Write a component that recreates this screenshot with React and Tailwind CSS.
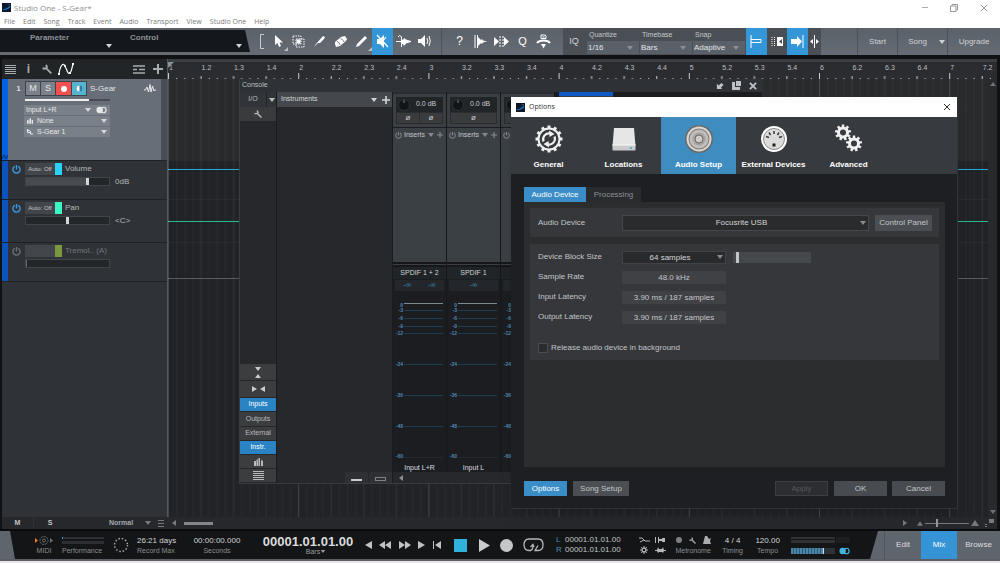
import React, { useState } from 'react';

const BAR = 130.2;
const BEAT = BAR / 4;

const MENU = ['File', 'Edit', 'Song', 'Track', 'Event', 'Audio', 'Transport', 'View', 'Studio One', 'Help'];

const METER_MARKS = [
  ['0', 11, 13],
  ['-3', 18, 18],
  ['-6', 26, 26],
  ['-9', 34, 34],
  ['-12', 41, 41],
  ['-24', 72, 72],
  ['-36', 103, 103],
  ['-48', 134, 134],
  ['-60', 165, 164],
];

const Down = ({ className = '' }) => (
  <svg viewBox="0 0 6 4" className={`w-[6px] h-1 shrink-0 ${className}`} fill="currentColor" aria-hidden="true">
    <path d="M0 0h6L3 4z" />
  </svg>
);

const Plus = ({ className = 'size-2' }) => (
  <svg viewBox="0 0 10 10" className={`shrink-0 ${className}`} stroke="currentColor" strokeWidth="2" aria-hidden="true">
    <path d="M5 0v10M0 5h10" />
  </svg>
);

const Wrench = ({ className = 'size-[10px]' }) => (
  <svg viewBox="0 0 10 10" className={`shrink-0 ${className}`} fill="none" stroke="currentColor" strokeWidth="1.800" aria-hidden="true">
    <path d="M.5 4.500h3.500l1-1.500L4 .8M4.300 4.300l5 5" />
  </svg>
);

const Power = ({ className = '' }) => (
  <svg viewBox="0 0 10 10" className={`shrink-0 ${className}`} fill="none" stroke="currentColor" strokeWidth="1.500" aria-hidden="true">
    <path d="M3 1.500a4 4 0 1 0 4 0M5 0v5" />
  </svg>
);

const Lines = ({ className = 'w-[11px] h-[9px]' }) => (
  <svg
    viewBox="0 0 11 9"
    preserveAspectRatio="none"
    shapeRendering="crispEdges"
    className={`shrink-0 ${className}`}
    fill="currentColor"
    aria-hidden="true"
  >
    <path d="M0 0h11v1H0zM0 2h11v1H0zM0 4h11v1H0zM0 6h11v1H0zM0 8h11v1H0z" />
  </svg>
);

const Bars = ({ className = '' }) => (
  <svg viewBox="0 0 9 8" className={`shrink-0 ${className}`} fill="currentColor" aria-hidden="true">
    <path d="M0 3h2v5H0zM2.500 1.500h1.500v6.500H2.500zM4.500 0h1.500v8H4.500zM7 2.500h2V8H7z" />
  </svg>
);

const Stereo = ({ className = '' }) => (
  <svg viewBox="0 0 12 8" className={`shrink-0 ${className}`} aria-hidden="true">
    <circle cx="4" cy="4" r="3.500" fill="currentColor" />
    <circle cx="8" cy="4" r="3" fill="none" stroke="currentColor" strokeWidth="1.300" />
  </svg>
);

const AppLogo = ({ className = '' }) => (
  <svg viewBox="0 0 10 10" className={`shrink-0 ${className}`} aria-hidden="true">
    <rect width="10" height="10" fill="#0c1829" />
    <path d="M1 7c3 0 4-1 8-4v2C6 7 4 8 1 8z" fill="#1e7fd6" />
    <path d="M5 2l4-1v2z" fill="#35506e" />
  </svg>
);

const Select = ({ label, options, className = '', textClass = '', arrowClass = 'right-1 text-gray-400', icon }) => (
  <span className={`relative flex items-center ${className}`}>
    {icon}
    <select aria-label={label} className={`w-full h-full appearance-none bg-transparent p-0 outline-none ${textClass}`}>
      {options.map((o) => (
        <option key={o}>{o}</option>
      ))}
    </select>
    <Down className={`pointer-events-none absolute ${arrowClass}`} />
  </span>
);

/* ---------- title + menu ---------- */

const TitleBar = () => (
  <header className="bg-white text-[#7b7b7b] font-['Open_Sans',sans-serif]">
    <div className="flex h-[15px] items-center pl-[2px] pr-3">
      <AppLogo className="size-[9px]" />
      <h1 className="ml-[3px] text-[8px] leading-[15px] text-[#8f8f8f]">Studio One - S-Gear*</h1>
      <div className="ml-auto flex items-center gap-[22px] text-[#999]">
        <button aria-label="Minimize" className="w-[6px] h-px bg-[#aaa]" />
        <button aria-label="Restore">
          <svg viewBox="0 0 8 8" className="size-2" fill="none" stroke="currentColor">
            <path d="M.5 2h5.500v5.500H.5zM2 2V.5h5.500V6H6" />
          </svg>
        </button>
        <button aria-label="Close">
          <svg viewBox="0 0 8 8" className="size-2" fill="none" stroke="currentColor">
            <path d="M1 1l6 6M7 1L1 7" />
          </svg>
        </button>
      </div>
    </div>
    <nav className="flex h-[13px] items-center gap-2 pl-1 text-[7px] leading-[13px]">
      {MENU.map((m) => (
        <button key={m}>{m}</button>
      ))}
    </nav>
  </header>
);

/* ---------- toolbar ---------- */

const TOOLS = [
  { name: 'Arrow', corner: true, d: <path d="M5 1v10l2.500-2 1.500 4 2-1-1.500-3.500H13z" fill="currentColor" /> },
  {
    name: 'Range',
    d: (
      <>
        <path d="M2 2h8v8H2zM5 5h8v8H5z" fill="none" stroke="currentColor" strokeDasharray="1.500 1" />
        <path d="M5.500 5.500h4v4h-4z" fill="currentColor" />
      </>
    ),
  },
  { name: 'Split', d: <path d="M2 13l2-3 7-8 2 1-1 2-4 4H6z" fill="currentColor" /> },
  {
    name: 'Eraser',
    d: (
      <>
        <path d="M2 8l6-5 4-1 2 3-1 2-6 5-4 1-1-3z" fill="currentColor" />
        <path d="M4 7.500q2.500.5 3 3.500M7.500 4.500q2.500.5 3.500 3.500" fill="none" stroke="#62686f" strokeWidth=".8" />
      </>
    ),
  },
  { name: 'Paint', corner: true, d: <path d="M2 13l1-3 8-8 2 2-8 8z" fill="currentColor" /> },
  {
    name: 'Mute',
    active: true,
    d: (
      <>
        <path d="M2 5h3l4-4v13l-4-4H2z" fill="currentColor" />
        <path d="M2 1l11 12M11 3l-3 4" stroke="currentColor" strokeWidth="1.200" />
      </>
    ),
  },
  {
    name: 'Bend',
    d: (
      <>
        <path d="M0 7h5V5l2 1 1-2 2 1.500L15 7v1l-5 1.500L8 12l-1-2-2 .5V8H0z" fill="currentColor" />
        <path d="M5.500 6V2.500M5.500 9v4M2 3q1.500-3 3.500 0" fill="none" stroke="currentColor" />
      </>
    ),
  },
  {
    name: 'Listen',
    d: (
      <>
        <path d="M1 5h3l4-4v12L4 9H1z" fill="currentColor" />
        <path d="M10 4q1.500 3 0 6M12 2q2.500 5 0 10" fill="none" stroke="currentColor" />
      </>
    ),
  },
];

const ToolIcon = ({ children }) => (
  <svg viewBox="0 0 15 15" className="size-[15px]" aria-hidden="true">{children}</svg>
);

const Toolbar = () => {
  const [tool, setTool] = useState('Mute');
  return (
    <div className="flex h-[27px] bg-gradient-to-b from-[#5b6168] to-[#666c75] text-white">
      {/* Parameter / Control */}
      <div className="flex w-[250px] shrink-0 items-stretch my-[2px] mb-[3px] bg-[#14181d] text-[8px] font-bold text-[#8d9196] [clip-path:polygon(0_0,245px_0,250px_100%,0_100%)]">
        <button className="relative w-[125px] pl-[30px] pb-[6px] text-left leading-[16px]">
          Parameter
          <Down className="absolute bottom-1 right-[13px] text-[#d3d5d7]" />
        </button>
        <button className="relative w-[125px] pl-[5px] pb-[6px] text-left leading-[16px]">
          Control
          <Down className="absolute bottom-1 right-2 text-[#d3d5d7]" />
        </button>
      </div>

      <div className="flex w-[17px] shrink-0 items-center justify-end pr-[3px] text-[#c8cacc]">
        <svg viewBox="0 0 4 15" className="w-1 h-[15px]" fill="none" stroke="currentColor" aria-hidden="true">
          <path d="M4 .5H.5v14H4" />
        </svg>
      </div>
      <div className="flex shrink-0">
        {TOOLS.map((t) => (
          <button
            key={t.name}
            aria-label={t.name}
            onClick={() => setTool(t.name)}
            className={`relative flex w-[21px] items-center justify-center ${tool === t.name ? 'bg-[#3396d8]' : ''}`}
          >
            <ToolIcon>{t.d}</ToolIcon>
            {t.corner && (
              <svg viewBox="0 0 4 4" className="absolute bottom-1 right-0 size-1 text-[#b9bcc0]" fill="currentColor">
                <path d="M4 0v4H0z" />
              </svg>
            )}
          </button>
        ))}
      </div>
      <div className="ml-[6px] w-px shrink-0 bg-[#4d5258]" />
      <div className="flex shrink-0 pl-[7px] pr-[9px] text-white">
        <button aria-label="Help" className="w-[21px] text-[12px] leading-[27px]">?</button>
        <button aria-label="Strip silence" className="flex w-[21px] items-center justify-center">
          <ToolIcon>
            <path d="M2 1v13M4.500 1v13" stroke="currentColor" />
            <path d="M5 3l3 3 1-1 1 1.500 4 1-4 1L9 10 8 9l-3 3z" fill="currentColor" />
          </ToolIcon>
        </button>
        <button aria-label="Quantize transients" className="flex w-[21px] items-center justify-center">
          <ToolIcon>
            <path d="M6 2v11M9 2v11" stroke="currentColor" strokeDasharray="2 1" />
            <path d="M0 3l5 4.500L0 12zM10 3l5 4.500-5 4.500z" fill="currentColor" />
          </ToolIcon>
        </button>
        <button aria-label="Quantize" className="w-[21px] text-[11px] leading-[27px]">Q</button>
        <button aria-label="Macros" className="flex w-[21px] items-center justify-center">
          <ToolIcon>
            <path d="M5 1h4l1 1v2.500H5zM6.500 3h2" fill="none" stroke="currentColor" />
            <path d="M1 9q2-2.500 6.500-2.500T14 9" fill="none" stroke="currentColor" strokeWidth="2" />
            <path d="M5 10h5l-2.500 4.500z" fill="currentColor" />
          </ToolIcon>
        </button>
      </div>

      {/* Quantize group */}
      <div className="flex shrink-0 bg-[#4a4f56]">
        <button className="w-[24px] pr-[2px] text-[9px] text-[#d3d5d7]">IQ</button>
        {[
          ['Quantize', ['1/16', '1/8', '1/4']],
          ['Timebase', ['Bars', 'Seconds', 'Samples']],
          ['Snap', ['Adaptive', 'Bar', 'Quantize']],
        ].map(([label, options]) => (
          <div key={label} className="flex w-[53px] flex-col border-r border-[#4a4f56] text-[#c4c7ca]">
            <span className="h-[13px] pl-[2px] text-[7px] leading-[13px]">{label}</span>
            <Select
              label={label}
              options={options}
              className="h-[13px] bg-[#5a6068] pl-px"
              textClass="text-[8px] text-[#e4e6e8]"
              arrowClass="right-[6px] text-[#8b9096]"
            />
          </div>
        ))}
        <button aria-label="Autoscroll" className="flex w-[21px] items-center justify-center bg-[#3396d8]">
          <ToolIcon>
            <path d="M2 1v13" stroke="currentColor" />
            <path d="M2 5.500h10v3H2" fill="none" stroke="currentColor" />
          </ToolIcon>
        </button>
        <button aria-label="Cursor follows edit" className="flex w-[20px] items-center justify-center">
          <ToolIcon>
            <path d="M2 3v9M4.500 3v9" stroke="currentColor" strokeDasharray="1 1" />
            <path d="M7 3h6v9H7z" fill="currentColor" />
            <path d="M12 5v5L9 7.500z" fill="#4a4f56" />
          </ToolIcon>
        </button>
        <button aria-label="Return to start" className="flex w-[21px] items-center justify-center bg-[#3396d8]">
          <ToolIcon>
            <path d="M1 5h6V2l5 5.500L7 13v-3H1z" fill="currentColor" />
            <path d="M13 1v13" stroke="currentColor" />
          </ToolIcon>
        </button>
        <button aria-label="Snap" className="flex w-[13px] items-center justify-center">
          <svg viewBox="0 0 11 15" className="w-[11px] h-[15px]" fill="currentColor" aria-hidden="true">
            <path d="M5 1h1v13H5zM4 5v5L1 7.500zM7 5v5l3-2.500z" />
          </svg>
        </button>
      </div>

      <div className="flex-1" />
      <div className="flex shrink-0 text-[8px] text-[#d0d3d6]">
        <button className="w-[40px] border-l border-[#4d5258]">Start</button>
        <button className="w-[40px] border-l border-[#4d5258]">Song</button>
        <button aria-label="Song list" className="flex w-[10px] items-center justify-center"><Down /></button>
        <button className="w-[53px] border-l border-[#4d5258]">Upgrade</button>
      </div>
    </div>
  );
};

/* ---------- track list ---------- */

const AutomationTrack = ({ name, color, value, level, filled, off, className }) => (
  <li className={`flex border-b border-[#1f2225] ${className}`}>
    <div className="w-[6px] bg-[#0b54c0]" />
    <div className="flex-1 pl-1 pt-[2px]">
      <div className="flex h-3 items-center">
        <button aria-label={`${name} on/off`} className={off ? 'text-[#6c7075]' : 'text-[#3a9be6]'}>
          <Power className="size-[9px]" />
        </button>
        <button className="ml-1 h-3 w-[30px] bg-[#42454a] text-[6px] leading-3 text-[#c3c6c9]">{off ? '' : 'Auto: Off'}</button>
        <span className={`h-3 w-[7px] ${color}`} />
        <span className={`ml-[3px] text-[8px] ${off ? 'text-[#72767b]' : 'text-[#b4b7ba]'}`}>{name}</span>
      </div>
      <div className="flex h-[13px] items-center">
        <div className="relative ml-[13px] h-[9px] w-[85px] border border-[#414549] bg-[#222629]">
          {filled && <div className="h-full bg-[#474b4f]" style={{ width: `${level}%` }} />}
          <input
            type="range"
            aria-label={name}
            defaultValue={level}
            className={
              off
                ? 'absolute inset-0 w-full h-full appearance-none bg-transparent [&::-webkit-slider-thumb]:appearance-none [&::-webkit-slider-thumb]:w-px [&::-webkit-slider-thumb]:h-[7px] [&::-webkit-slider-thumb]:bg-[#666]'
                : 'absolute inset-0 w-full h-full appearance-none bg-transparent [&::-webkit-slider-thumb]:appearance-none [&::-webkit-slider-thumb]:w-[3px] [&::-webkit-slider-thumb]:h-[7px] [&::-webkit-slider-thumb]:bg-[#d5d5d5]'
            }
          />
        </div>
        <span className="ml-[5px] text-[8px] leading-[13px] text-[#b4b7ba]">{value}</span>
      </div>
    </div>
  </li>
);

const TrackList = () => (
  <aside className="flex w-[165px] shrink-0 flex-col bg-[#2f3337]">
    <div className="flex h-[20px] items-center bg-[#222528] pl-[3px] pr-1 text-[#a9acaf]">
      <button aria-label="Track list"><Lines /></button>
      <button aria-label="Inspector" className="ml-[10px] w-[5px] text-[12px] font-bold leading-[18px]">i</button>
      <button aria-label="Tools" className="ml-[11px]"><Wrench /></button>
      <button aria-label="Automation" className="ml-[6px] text-white">
        <svg viewBox="0 0 16 12" className="w-4 h-3" fill="none" stroke="currentColor" strokeWidth="1.200">
          <path d="M1 11C2 3 5-1 7 3s3 9 5 7 2-6 3-9" />
          <path d="M0 10h2v2H0zM6 2h2v2H6zM11 9h2v2h-2zM14 0h2v2h-2z" fill="currentColor" stroke="none" />
        </svg>
      </button>
      <button aria-label="Track settings" className="ml-auto">
        <svg viewBox="0 0 12 9" className="w-3 h-[9px]" stroke="currentColor" strokeWidth="1.500">
          <path d="M0 1h12M0 4.500h4M6 4.500h6M0 8h12" />
        </svg>
      </button>
      <button aria-label="Add track" className="ml-2"><Plus className="size-[10px]" /></button>
    </div>

    <ul>
      <li className="flex h-[82px] border-b border-[#1f2225] bg-[#686e78] text-white">
        <div className="flex w-[6px] items-end bg-[#0062e0]">
          <svg viewBox="0 0 6 6" className="size-[6px]" fill="none" stroke="#0a2d66" aria-hidden="true">
            <path d="M0 5l2-4 2 4 2-4" />
          </svg>
        </div>
        <div className="flex-1 pl-1 pr-1 pt-[2px]">
          <div className="flex h-[15px] items-center text-[8px]">
            <span className="w-[13px] text-center font-bold text-[#d9dbdd]">1</span>
            <div className="flex gap-px border border-[#3f444a] bg-[#3f444a] text-[9px] leading-[13px] text-[#e3e5e7]">
              <button className="h-[13px] w-[14px] bg-[#7c828a]">M</button>
              <button className="h-[13px] w-[14px] bg-[#7c828a]">S</button>
              <button aria-label="Record" className="flex h-[13px] w-[15px] items-center justify-center bg-[#f0504f]">
                <span className="size-[6px] rounded-full bg-white" />
              </button>
              <button aria-label="Monitor" className="flex h-[13px] w-[14px] items-center justify-center bg-[#55b4cf]">
                <svg viewBox="0 0 6 6" className="size-[7px]">
                  <circle cx="3" cy="3" r="2.500" fill="#2d7f9c" />
                  <path d="M3 .5a2.500 2.500 0 0 0 0 5z" fill="#fff" />
                </svg>
              </button>
            </div>
            <span className="ml-[3px] text-[#e3e5e7]">S-Gear</span>
            <svg viewBox="0 0 12 9" className="ml-auto mr-[1px] w-3 h-[9px]" fill="none" stroke="#e9eaec" aria-hidden="true">
              <path d="M0 6h1.500L3 3l1.500 5L6 .5 7 8l1.500-6L10 7l.5-1H12" />
            </svg>
          </div>
          <div className="ml-[13px] mt-[3px] flex h-[2px] w-[85px] bg-[#474c54]">
            <div className="w-3/4 bg-[#eceded]" />
          </div>
          <div className="ml-3 mt-1 flex w-[86px] flex-col gap-px text-[#e6e8ea]">
            <div className="flex h-[10px] items-center bg-[#7a8088]">
              <Select
                label="Input"
                options={['Input L+R', 'Input L', 'Input R']}
                className="h-full w-[67px] pl-[2px]"
                textClass="text-[7px]"
                arrowClass="right-0 text-[#d4d6d8]"
              />
              <button aria-label="Stereo" className="ml-[5px]"><Stereo className="w-[11px] h-2" /></button>
            </div>
            <Select
              label="Output"
              options={['None', 'Main']}
              icon={<Bars className="mr-1 size-[6px]" />}
              className="h-[10px] bg-[#7a8088] pl-[3px]"
              textClass="text-[7px]"
              arrowClass="right-[3px] text-[#d4d6d8]"
            />
            <Select
              label="Instrument"
              options={['S-Gear 1', 'S-Gear 2']}
              icon={
                <svg viewBox="0 0 6 6" className="mr-1 size-[6px] shrink-0" fill="none" stroke="currentColor" aria-hidden="true">
                  <path d="M.5 0v3.500H3M.5 1.500H3M3.500 2v3H6" />
                </svg>
              }
              className="h-[10px] bg-[#7a8088] pl-[3px]"
              textClass="text-[7px]"
              arrowClass="right-[3px] text-[#d4d6d8]"
            />
          </div>
        </div>
        <div className="w-[6px] bg-[#474d52]" />
      </li>
      <AutomationTrack name="Volume" color="bg-[#2bd0fb]" value="0dB" level={75} filled className="h-[39px]" />
      <AutomationTrack name="Pan" color="bg-[#3cf5c2]" value="<C>" level={50} className="h-[43px]" />
      <AutomationTrack name="Tremol.. (A)" color="bg-[#7c983c]" value="" level={0} off className="h-[39px]" />
    </ul>
  </aside>
);

/* ---------- arrangement ---------- */

const Ruler = () => {
  const beats = Array.from({ length: 26 }, (_, i) => i);
  return (
    <div className="relative h-[20px] overflow-hidden border-t-[3px] border-[#3a3e42] bg-[#2a2c2f]">
      <div className="flex pl-px pt-[1px] text-[7px] leading-[9px] text-[#bcbfc2]">
        {beats.map((b) => (
          <span key={b} className="shrink-0" style={{ width: BEAT }}>
            {Math.floor(b / 4) + 1}
            {b % 4 ? `.${(b % 4) + 1}` : ''}
          </span>
        ))}
      </div>
      <svg className="absolute bottom-0 left-0 w-full h-[6px]" aria-hidden="true">
        <defs>
          <pattern id="ticks" width={BAR} height="6" patternUnits="userSpaceOnUse">
            {Array.from({ length: 16 }, (_, i) => (
              <rect key={i} x={(i * BAR) / 16} y={i === 0 ? 0 : i % 4 ? 5 : 3} width="1" height="6" fill="#c9cbcd" />
            ))}
          </pattern>
        </defs>
        <rect width="100%" height="6" fill="url(#ticks)" />
      </svg>
      <svg viewBox="0 0 6 6" className="absolute left-0 top-0 size-[6px] text-[#8a9197]" fill="currentColor" aria-hidden="true">
        <path d="M0 0h6L0 6z" />
      </svg>
    </div>
  );
};

const Grid = () => (
  <svg className="absolute inset-0 w-full h-full" aria-hidden="true">
    <defs>
      <pattern id="grid" width={BAR} height="40" patternUnits="userSpaceOnUse">
        {Array.from({ length: 16 }, (_, i) => (
          <rect
            key={i}
            x={(i * BAR) / 16}
            width="1"
            height="40"
            fill="#fff"
            opacity={i === 0 ? 0.16 : i % 4 ? 0.03 : 0.07}
          />
        ))}
      </pattern>
    </defs>
    <rect width="100%" height="100%" fill="url(#grid)" />
  </svg>
);

const Arrangement = () => (
  <div className="relative flex min-w-0 flex-1 flex-col">
    <Ruler />
    <div className="flex flex-1 bg-[#27292c]">
      <div className="relative flex flex-1 flex-col bg-[#222326]">
        <div className="h-[82px] bg-[#2a2b2d]" />
        <div className="h-[39px] border-b border-[#2a2b2e] pt-2"><div className="h-px bg-[#23a9d8]" /></div>
        <div className="h-[43px] border-b border-[#2a2b2e] pt-[21px]"><div className="h-px bg-[#27b897]" /></div>
        <div className="h-[39px] pt-[35px]"><div className="h-px bg-[#57595c]" /></div>
        <Grid />
      </div>
      <div className="flex w-[9px] shrink-0 flex-col items-center justify-between py-[3px] text-[#6f7377]">
        <Down className="rotate-180" />
        <Down />
      </div>
    </div>
    <Console />
  </div>
);

/* ---------- console ---------- */

const Meter = () => (
  <svg viewBox="0 0 53 171" className="h-[171px] w-[53px]" aria-hidden="true">
    {METER_MARKS.map(([label, y, ty]) => (
      <g key={label}>
        <rect x="11" y={y} width="39" height="1" fill={label === '0' ? '#7f8a90' : label === '-60' ? '#222a30' : '#1f3d52'} />
        <text x="10" y={ty + 2} textAnchor="end" fontSize="5" fontWeight="bold" fill="#4e88b3">{label}</text>
      </g>
    ))}
  </svg>
);

const Channel = ({ io, name, gain, inserts, stereo }) => (
  <div className="flex w-[54px] shrink-0 flex-col border-r border-[#15171a] bg-[#1b1d20] text-[7px] text-[#c4c7ca]">
    <div className="h-[35px] border-t-2 border-[#2a2d31] bg-[#3b3f43] px-[3px] pt-[3px]">
      <div className="flex h-[15px] items-center bg-[#222528] pl-[2px]">
        <svg viewBox="0 0 12 12" className="size-3" aria-hidden="true">
          <circle cx="6" cy="6" r="5.500" fill="#131416" stroke="#30343a" />
          <path d="M6 1v3" stroke="#7c8084" />
        </svg>
        <span className="ml-[6px]">{gain}</span>
      </div>
      <div className="flex h-3 gap-px border border-[#2a2d30] bg-[#2a2d30] text-[8px] leading-[10px]">
        <button aria-label="Invert phase" className="flex-1 bg-[#3a3b3d]">{gain && 'ø'}</button>
        {stereo && <button aria-label="Invert phase right" className="flex-1 bg-[#3a3b3d]">ø</button>}
      </div>
    </div>
    <div className="h-[135px] border-t border-[#1c1f22] bg-[#3b4045] pt-px">
      <div className="flex h-3 items-center pl-[2px] pr-[3px]">
        <Power className="size-[7px] text-[#808488]" />
        <span className="ml-[2px]">{inserts}</span>
        <Down className="ml-auto text-[#85898d]" />
        <Plus className="ml-[3px] size-[6px] text-[#85898d]" />
      </div>
    </div>
    <div className="h-[5px] border-t-2 border-b-2 border-[#15171a] bg-[#3b3f43]" />
    <div className="h-3 bg-[#202427] text-center leading-[12px] text-[#d0d3d5]">{io}</div>
    <div className="mx-[2px] mt-[1px] mb-px flex h-[11px] justify-around bg-[#23262a] leading-[10px] text-[#3e8fb4]">
      {io && <span>-∞</span>}
      {stereo && <span>-∞</span>}
    </div>
    <Meter />
    <div className="h-[9px] text-center leading-[9px] text-[#dcdee0]">{name}</div>
  </div>
);

const Console = () => (
  <section aria-label="Console" className="absolute left-[71px] top-[20px] flex w-[523px] flex-col border-l border-b border-[#393d41] bg-[#26282c] text-[7px] text-[#b9bcbf]">
    <div className="flex h-[13px] items-center bg-[#2e3236] pl-[2px] pr-[5px]">
      <h2>Console</h2>
      <div className="ml-auto flex gap-2 text-[#c0c3c6]">
        <button aria-label="Dock">
          <svg viewBox="0 0 9 9" className="size-[8px]" fill="currentColor"><path d="M1 2v6h6L5.500 6.500 8.500 3 6 1 3 4z" /></svg>
        </button>
        <button aria-label="Detach">
          <svg viewBox="0 0 9 9" className="size-[9px]" fill="currentColor"><path d="M4 0h5v5H4zM0 1h3v5h5v3H0z" /></svg>
        </button>
        <button aria-label="Close console">
          <svg viewBox="0 0 9 9" className="size-[8px]" stroke="currentColor" strokeWidth="2"><path d="M1 1l7 7M8 1L1 8" /></svg>
        </button>
      </div>
    </div>
    <div className="flex h-[391px]">
      {/* left switches */}
      <div className="flex w-[37px] shrink-0 flex-col border-r border-[#191b1e]">
        <div className="flex h-[15px] bg-[#313438]">
          <button className="flex-1">I/O</button>
          <button aria-label="I/O menu" className="flex w-[10px] items-center justify-center border-l border-[#212427]"><Down /></button>
        </div>
        <button aria-label="Console options" className="flex h-[14px] items-center justify-center bg-[#3a3b3d]"><Wrench className="size-2" /></button>
        <div className="flex-1" />
        <div className="flex flex-col [&>button]:border-b [&>button]:border-[#25272a]">
          <button aria-label="Expand height" className="flex h-[17px] flex-col items-center justify-center gap-[3px] bg-[#3c3d3f] text-[#c9cccf]">
            <Down />
            <Down className="rotate-180" />
          </button>
          <button aria-label="Expand width" className="flex h-[17px] items-center justify-center bg-[#3c3d3f] text-[#c9cccf]">
            <svg viewBox="0 0 13 6" className="w-[13px] h-[6px]" fill="currentColor"><path d="M0 0l5 3-5 3zM13 0L8 3l5 3z" /></svg>
          </button>
          <button className="h-[14px] bg-[#2a84c4] text-white">Inputs</button>
          <button className="h-[15px] bg-[#3c3d3f]">Outputs</button>
          <button className="h-[14px] bg-[#3c3d3f]">External</button>
          <button className="h-[14px] bg-[#2a84c4] text-white">Instr.</button>
          <button aria-label="Banks" className="flex h-[14px] items-center justify-center bg-[#3c3d3f]"><Bars className="w-[9px] h-2" /></button>
          <button aria-label="Channel list" className="flex h-[14px] items-center justify-center bg-[#3c3d3f]"><Lines /></button>
        </div>
      </div>

      {/* instruments */}
      <div className="flex w-[116px] shrink-0 flex-col border-r border-[#191b1e]">
        <div className="flex h-[15px] items-center bg-[#44484c] pl-1 pr-[2px] text-[#d3d6d8]">
          <span>Instruments</span>
          <button aria-label="Instruments menu" className="ml-auto"><Down /></button>
          <button aria-label="Add instrument" className="ml-[5px]"><Plus /></button>
        </div>
        <div className="flex-1" />
        <div className="flex h-[11px] justify-end gap-px">
          <button aria-label="Small" className="flex w-[23px] items-end justify-center bg-[#2e3033] pb-[2px]"><span className="h-[2px] w-[11px] bg-[#c9cccf]" /></button>
          <button aria-label="Large" className="flex w-[23px] items-end justify-center bg-[#2e3033] pb-[2px]"><span className="h-1 w-[11px] border border-[#7f8387]" /></button>
        </div>
      </div>

      {/* channels */}
      <div className="flex min-w-0 flex-1 flex-col bg-[#1b1d20]">
        <div className="flex flex-1">
          <Channel io="SPDIF 1 + 2" name="Input L+R" gain="0.0 dB" inserts="Inserts" stereo />
          <Channel io="SPDIF 1" name="Input L" gain="0.0 dB" inserts="Inserts" />
          <Channel />
          <div className="ml-1 h-full w-[54px] border-t-4 border-[#0f57c4] bg-[#3b3f43]" />
        </div>
        <div className="flex h-[11px] items-center bg-[#26282b] pl-[5px]">
          <Down className="rotate-90 text-[#8b8e92]" />
        </div>
      </div>
    </div>
  </section>
);

/* ---------- options dialog ---------- */

const Gear = ({ cx, cy, r, teeth, width, hole }) => (
  <g fill="none" stroke="#f0f0f0">
    <circle cx={cx} cy={cy} r={r} strokeWidth={width} />
    <g fill="#f0f0f0" stroke="none">
      {Array.from({ length: teeth }, (_, i) => (
        <rect
          key={i}
          x={cx - hole / 2}
          y={cy - r - width / 2 - 2}
          width={hole}
          height="3"
          transform={`rotate(${(360 / teeth) * i} ${cx} ${cy})`}
        />
      ))}
    </g>
  </g>
);

const PAGES = [
  {
    name: 'General',
    icon: (
      <>
        <Gear cx={15} cy={15} r={10.5} teeth={12} width={2} hole={3} />
        <path d="M9.500 17.500a6 6 0 0 1 7-8M20.500 12.500a6 6 0 0 1-7 8" fill="none" stroke="#f0f0f0" strokeWidth="2.200" />
        <path d="M15 6.500l5.500 3.500-5 3zM15 23.500L9.500 20l5-3z" fill="#f0f0f0" />
      </>
    ),
  },
  {
    name: 'Locations',
    icon: (
      <>
        <path d="M5 4h20l1.500 18h-23z" fill="#e6e6e6" />
        <path d="M3.500 21h23v5.500h-23z" fill="#cbcbcb" />
        <path d="M3.500 21h23" stroke="#fafafa" />
        <circle cx="22" cy="24" r="1" fill="#3a9be0" />
      </>
    ),
  },
  {
    name: 'Audio Setup',
    icon: (
      <>
        <circle cx="15" cy="15" r="14" fill="#6b6967" />
        <circle cx="15" cy="15" r="12.500" fill="#d9d6d3" />
        <circle cx="15" cy="15" r="10.500" fill="#7f7c7a" />
        <circle cx="15" cy="15" r="9.500" fill="#c0bdba" />
        <circle cx="15" cy="15" r="6.500" fill="#a5a29f" />
        <circle cx="15" cy="15" r="4" fill="#cfccc9" stroke="#6b6866" />
      </>
    ),
  },
  {
    name: 'External Devices',
    icon: (
      <>
        <circle cx="15" cy="15" r="13" fill="#fff" />
        <circle cx="15" cy="15" r="10.500" fill="#dcdcdc" stroke="#8a8a8a" />
        <g fill="none" stroke="#3a3a3a" strokeWidth="1.500">
          <path d="M15 7v3M10 8.500l1.500 2.500M20 8.500L18.500 11M7 12.500l3 1M23 12.500l-3 1" />
        </g>
        <path d="M13.500 19.500h3v3h-3z" fill="#222" />
      </>
    ),
  },
  {
    name: 'Advanced',
    icon: (
      <>
        <Gear cx={9} cy={8.5} r={4.5} teeth={9} width={3} hole={2.5} />
        <Gear cx={20} cy={19.5} r={4.5} teeth={9} width={3} hole={2.5} />
      </>
    ),
  },
];

const Readout = ({ label, value }) => (
  <div className="flex h-[14px] items-center">
    <span className="w-[84px]">{label}</span>
    <output className="h-[13px] w-[104px] bg-[#404145] text-center leading-[13px]">{value}</output>
  </div>
);

const OptionsDialog = () => {
  const [page, setPage] = useState('Audio Setup');
  return (
    <div role="dialog" aria-label="Options" className="absolute left-[511px] top-[97px] w-[447px] border-r border-b border-[#303337] bg-[#1d1f22] text-[8px] text-[#c3c6c9] shadow-lg">
      <div className="flex h-[20px] items-center bg-white pl-[5px] pr-[6px] font-['Open_Sans',sans-serif] text-[#333]">
        <AppLogo className="size-[9px]" />
        <span className="ml-[4px] text-[7px]">Options</span>
        <button aria-label="Close" className="ml-auto">
          <svg viewBox="0 0 8 8" className="size-2" fill="none" stroke="currentColor"><path d="M1 1l6 6M7 1L1 7" /></svg>
        </button>
      </div>

      <div className="flex h-[57px] bg-[#373a3e]">
        {PAGES.map((p) => (
          <button
            key={p.name}
            onClick={() => setPage(p.name)}
            className={`flex w-[75px] flex-col items-center whitespace-nowrap pt-[7px] font-bold text-white ${page === p.name ? 'bg-[#3e8cc0]' : ''}`}
          >
            <svg viewBox="0 0 30 30" className="size-[30px]" aria-hidden="true">{p.icon}</svg>
            <span className="mt-[5px] leading-[11px]">{p.name}</span>
          </button>
        ))}
      </div>

      <div className="pl-[13px] pr-3 pt-[13px] pb-3">
        <div className="flex h-[15px]">
          <button className="w-[62px] bg-[#3a8dc6] text-white">Audio Device</button>
          <button className="w-[55px] bg-[#2a2b2e] text-[#8b8e91]">Processing</button>
        </div>
        <div className="h-[265px] bg-[#2c2d2f] px-[6px] pt-[6px]">
          <div className="flex h-[29px] items-center bg-[#36373a] pl-2 pr-[7px]">
            <span className="w-[84px] shrink-0">Audio Device</span>
            <Select
              label="Audio Device"
              options={['Focusrite USB', 'Windows Audio']}
              className="h-4 flex-1 border border-[#45474a] bg-[#2a2b2d]"
              textClass="pr-2! text-center text-[#d3d5d7]"
              arrowClass="right-[2px] text-[#8a8d90]"
            />
            <button className="ml-[6px] h-4 w-[57px] bg-[#4b4e53]">Control Panel</button>
          </div>

          <div className="mt-[7px] flex h-[116px] flex-col gap-[6px] bg-[#36373a] pl-2 pt-[6px]">
            <div className="flex h-[14px] items-center">
              <span className="w-[84px]">Device Block Size</span>
              <Select
                label="Device Block Size"
                options={['64 samples', '128 samples', '256 samples']}
                className="h-[13px] w-[104px] border border-[#404245] bg-[#292a2c]"
                textClass="pr-2! text-center text-[#d3d5d7]"
                arrowClass="right-[2px] text-[#8a8d90]"
              />
              <input
                type="range"
                aria-label="Block size"
                min="0"
                max="100"
                defaultValue="4"
                className="ml-[7px] h-[11px] w-[78px] appearance-none bg-[#45484b] [&::-webkit-slider-thumb]:appearance-none [&::-webkit-slider-thumb]:w-[3px] [&::-webkit-slider-thumb]:h-[11px] [&::-webkit-slider-thumb]:bg-[#c2c4c6]"
              />
            </div>
            <Readout label="Sample Rate" value="48.0 kHz" />
            <Readout label="Input Latency" value="3.90 ms / 187 samples" />
            <Readout label="Output Latency" value="3.90 ms / 187 samples" />
            <label className="mt-3 flex items-center gap-[3px]">
              <input type="checkbox" className="size-[10px] appearance-none border border-[#4a4c4f] bg-[#2b2c2e] checked:bg-[#3a8dc6]" />
              Release audio device in background
            </label>
          </div>
        </div>
        <div className="mt-[14px] flex h-[15px]">
          <button className="w-[43px] bg-[#3a8dc6] text-white">Options</button>
          <button className="ml-[6px] w-[56px] bg-[#4b4e52]">Song Setup</button>
          <button disabled className="ml-auto w-[53px] border border-[#3c3f43] bg-[#2c2e31] text-[#55585c]">Apply</button>
          <button className="ml-[6px] w-[53px] bg-[#484b4f]">OK</button>
          <button className="ml-[5px] w-[53px] bg-[#484b4f]">Cancel</button>
        </div>
      </div>
    </div>
  );
};

/* ---------- bottom ---------- */

const BottomScroll = () => (
  <div className="flex h-[12px] items-center bg-[#26282c] text-[7px] text-[#c4c7ca]">
    <button className="w-[31px] font-bold">M</button>
    <button className="w-[33px] border-l border-[#2f3236] font-bold">S</button>
    <span className="ml-[32px] flex items-center gap-[7px]">
      <Select
        label="Track height"
        options={['Normal', 'Small', 'Large']}
        className="w-[53px] pl-[11px]"
        textClass="font-bold text-[#a6a9ac]"
        arrowClass="right-0 text-[#77797c]"
      />
      <Lines className="w-[6px] h-[7px] text-[#77797c]" />
    </span>
    <Down className="ml-[7px] rotate-90 text-[#77797c]" />
    <div className="ml-[7px] h-[3px] w-[29px] bg-[#85888b]" />
    <div className="ml-auto flex items-center pr-[3px] text-[#77797c]">
      <Down className="-rotate-90" />
      <svg viewBox="0 0 8 6" className="ml-[9px] w-[6px] h-[5px]" fill="currentColor"><path d="M0 6l4-6 4 6z" /></svg>
      <input
        type="range"
        aria-label="Zoom"
        defaultValue="25"
        className="mx-[2px] h-[9px] w-[44px] appearance-none bg-[linear-gradient(#77797c,#77797c)] bg-[length:100%_1px] bg-center bg-no-repeat [&::-webkit-slider-thumb]:appearance-none [&::-webkit-slider-thumb]:w-[2px] [&::-webkit-slider-thumb]:h-[8px] [&::-webkit-slider-thumb]:bg-[#999]"
      />
      <svg viewBox="0 0 8 6" className="w-2 h-[6px]" fill="currentColor"><path d="M0 6l4-6 4 6z" /></svg>
      <svg viewBox="0 0 9 8" className="ml-[6px] w-[9px] h-2" fill="currentColor"><path d="M4 0h5v4H4zM0 5h2v1H0zM0 7h2v1H0z" /></svg>
    </div>
  </div>
);

const TBtn = ({ label, className, box, d }) => (
  <button aria-label={label} className={`flex items-center justify-center ${className}`}>
    <svg viewBox={`0 0 ${box} 8`} className="h-2" fill="currentColor"><path d={d} /></svg>
  </button>
);

const Stat = ({ className = '', top, bottom }) => (
  <div className={`flex flex-col justify-center ${className}`}>
    <span className="h-[11px] leading-[11px] text-[8px] text-[#d2d4d6]">{top}</span>
    <span className="h-[10px] leading-[10px] text-[7px] text-[#8b8e91]">{bottom}</span>
  </div>
);

const Transport = () => (
  <footer className="border-t-2 border-[#0b0c0d]">
    <div className="flex h-[28px] bg-[#5f656d]">
      <div className="ml-[10px] flex flex-1 items-center bg-[#141516] pl-[20px] text-[#c3c6c8] [clip-path:polygon(0_0,100%_0,calc(100%-8px)_100%,5px_100%)]">
        <Stat
          className="w-[28px] items-center"
          top={
            <svg viewBox="0 0 18 11" className="h-[11px] w-[18px]" aria-label="MIDI activity">
              <path d="M0 3l3 2.500L0 8z" fill="#ee7a28" />
              <circle cx="9" cy="5.500" r="4" fill="none" stroke="#6d7073" strokeDasharray="2 1" />
              <circle cx="9" cy="5.500" r="1.500" fill="none" stroke="#6d7073" />
              <path d="M15 3l3 2.500L15 8z" fill="#6d7073" />
            </svg>
          }
          bottom="MIDI"
        />
        <Stat
          className="ml-1 w-[42px] whitespace-nowrap"
          top={
            <span className="flex h-[9px] flex-col gap-[2px] pt-[2px]">
              <span className="h-[3px] border-l border-[#3396d8] bg-[#2c2f33]" />
              <span className="h-[3px] bg-[#2c2f33]" />
            </span>
          }
          bottom="Performance"
        />
        <svg viewBox="0 0 16 16" className="ml-[9px] size-4" aria-hidden="true">
          <circle cx="8" cy="8" r="6.500" fill="none" stroke="#a4a7aa" strokeWidth="1.500" strokeDasharray="1.500 1.900" />
        </svg>
        <Stat className="ml-2 w-[46px]" top="26:21 days" bottom="Record Max" />
        <Stat className="ml-px w-[66px] items-center" top="00:00:00.000" bottom="Seconds" />
        <div className="ml-[7px] flex w-[102px] flex-col items-center justify-center">
          <span className="h-[13px] text-[13px] font-bold leading-[13px] text-[#dadcdd]">00001.01.01.00</span>
          <button className="ml-4 flex h-2 items-center text-[7px] leading-2 text-[#9a9da0]">Bars<Down className="w-1 h-[3px]" /></button>
        </div>
        <div className="ml-[2px] flex text-[#c0c2c4]">
          <TBtn label="Previous marker" className="w-[14px]" box={7} d="M7 0v8L0 4z" />
          <TBtn label="Rewind" className="w-[20px]" box={12} d="M6 0v8L0 4zM12 0v8L6 4z" />
          <TBtn label="Forward" className="w-[20px]" box={12} d="M0 0v8l6-4zM6 0v8l6-4z" />
          <TBtn label="Next marker" className="w-[12px]" box={7} d="M0 0v8l7-4z" />
          <TBtn label="Return to zero" className="w-[20px]" box={9} d="M0 0h1v8H0zM8 0v8L2 4z" />
        </div>
        <button aria-label="Stop" className="ml-[7px] size-[13px] bg-[#2fb2dc]" />
        <button aria-label="Play" className="ml-3">
          <svg viewBox="0 0 11 13" className="w-[11px] h-[13px]" fill="#c9cbcc"><path d="M0 0l11 6.500L0 13z" /></svg>
        </button>
        <button aria-label="Record" className="ml-[10px] size-[13px] rounded-full bg-[#c4c6c7]" />
        <button aria-label="Loop" className="ml-[10px]">
          <svg viewBox="0 0 21 14" className="w-[21px] h-[14px]" fill="none" stroke="#b5b7b9" strokeWidth="1.300">
            <path d="M8 12.500H6Q1 12.500 1 6.800T6 1h9q5 0 5 5.800t-5 5.700h-3l3-5M7 12.500q3 0 3-5M7.500 9L10 6.500 11 9" />
          </svg>
        </button>
        <div className="ml-3 flex flex-col text-[8px] leading-[10px]">
          <span className="flex"><b className="w-[9px] font-normal text-[#4b8fb0]">L</b>00001.01.01.00</span>
          <span className="flex"><b className="w-[9px] font-normal text-[#4b8fb0]">R</b>00001.01.01.00</span>
        </div>
        <div className="ml-[18px] grid grid-cols-2 gap-x-[5px] gap-y-[2px] text-[#b5b7b9]">
          <svg viewBox="0 0 11 8" className="w-[11px] h-2" fill="none" stroke="currentColor"><path d="M0 2h3l3 3h5M1 6l4-2" /></svg>
          <svg viewBox="0 0 11 8" className="w-[11px] h-2" fill="currentColor"><path d="M0 1h1v6H0zM3 1h1v6H3zM4 3h3V2h3v4H7V5H4z" /></svg>
          <svg viewBox="0 0 11 8" className="w-[11px] h-2" fill="none" stroke="currentColor"><circle cx="5" cy="4" r="2" strokeWidth="1.300" /><path d="M5 0v8M1 4h8M2.200 1.200l1 1M7.800 1.200l-1 1M2.200 6.800l1-1M7.800 6.800l-1-1" strokeDasharray="1.500 5 1.500" /></svg>
          <svg viewBox="0 0 11 8" className="w-[11px] h-2" fill="currentColor"><path d="M0 4h2l1-3 1 2h3l1-2 1 3h2v1H9L8 7 7 6H4L3 7 2 5H0z" /></svg>
        </div>
        <Stat
          className="ml-[9px] w-[37px] items-center"
          top={
            <span className="flex h-[11px] items-center gap-[7px] text-[#aaadaf]">
              <span className="size-[6px] rounded-full bg-[#7c8083]" />
              <Wrench className="size-[7px]" />
              <svg viewBox="0 0 8 8" className="size-2" fill="currentColor"><path d="M2 0h2l2 3 2-1-1 3 1 3H0z" /></svg>
            </span>
          }
          bottom="Metronome"
        />
        <Stat className="ml-[8px] w-[26px] items-center" top="4 / 4" bottom="Timing" />
        <Stat className="ml-[7px] w-[30px] items-center" top="120.00" bottom="Tempo" />
        <div className="ml-[8px] flex flex-col gap-[5px]">
          <div className="flex h-[6px] gap-px">
            <div className="flex w-[44px] flex-col gap-px"><i className="flex-1 bg-[#303336]" /><i className="flex-1 bg-[#303336]" /></div>
            <i className="w-[14px] bg-[#1c1e20]" />
          </div>
          <div className="flex h-[6px] items-center">
            <div className="h-full w-[32px] bg-[repeating-linear-gradient(90deg,#4b86a8_0_2px,#2b5873_2px_3px)]" />
            <div className="h-full w-px bg-[#d5dadd]" />
            <div className="h-full w-[11px] bg-[#2c3136]" />
            <Stereo className="ml-1 w-[11px] h-2 text-[#3fb4dc]" />
          </div>
        </div>
      </div>
      <div className="flex pl-[6px] text-[8px] text-[#dcdee0]">
        <button className="w-[37px] border-l border-[#50555c]">Edit</button>
        <button className="w-[36px] bg-[#3594d6] text-white">Mix</button>
        <button className="w-[43px]">Browse</button>
      </div>
    </div>
    <div className="h-[2px] bg-[#5b5f64]" />
    <div className="h-[2px] bg-[#e8e6ea]" />
  </footer>
);

const App = () => (
  <div className="relative flex min-h-screen flex-col overflow-hidden bg-[#101214] font-['Liberation_Sans',Arial,sans-serif]">
    <TitleBar />
    <Toolbar />
    <main className="flex flex-1 flex-col pl-[2px] pr-[3px] pt-1">
      <div className="flex flex-1">
        <TrackList />
        <div className="w-px bg-[#55595d]" />
        <Arrangement />
      </div>
      <BottomScroll />
    </main>
    <Transport />
    <OptionsDialog />
  </div>
);

export default App;
